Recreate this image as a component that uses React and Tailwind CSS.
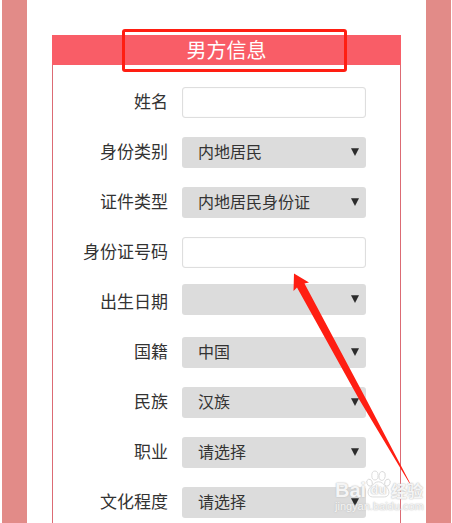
const fields = [
  { id: "name", label: "姓名", kind: "input" },
  { id: "identity", label: "身份类别", kind: "select", value: "内地居民" },
  { id: "document", label: "证件类型", kind: "select", value: "内地居民身份证" },
  { id: "number", label: "身份证号码", kind: "input" },
  { id: "birth", label: "出生日期", kind: "select", value: "", raised: true },
  { id: "country", label: "国籍", kind: "select", value: "中国" },
  { id: "ethnic", label: "民族", kind: "select", value: "汉族" },
  { id: "job", label: "职业", kind: "select", value: "请选择" },
  { id: "education", label: "文化程度", kind: "select", value: "请选择" },
];

function Field({ field }) {
  return (
    <div className={`flex h-[37px] gap-3.5 ${field.raised ? "items-start" : "items-center"}`}>
      <label
        htmlFor={field.id}
        className="w-[115px] shrink-0 self-center pb-[3px] text-right text-[17px] leading-6 whitespace-nowrap text-[#333]"
      >
        {field.label}
      </label>
      {field.kind === "input" ? (
        <input
          id={field.id}
          type="text"
          className="h-[31px] w-0 min-w-0 flex-1 rounded-[3px] border border-[#dedede] bg-white px-4 text-base text-[#333] shadow-[inset_0_0_1px_#dedede] outline-none"
        />
      ) : (
        <div className="relative min-w-0 flex-1">
          <select
            id={field.id}
            defaultValue={field.value}
            className="block h-[31px] w-full appearance-none rounded-[3px] bg-[#dcdcdc] px-4 pb-[3px] text-base leading-6 text-[#333] outline-none"
          >
            <option value={field.value}>{field.value}</option>
          </select>
          <svg
            viewBox="0 0 8 8"
            className="pointer-events-none absolute top-[11px] right-[7px] size-2 fill-[#2b2b2b]"
            aria-hidden="true"
          >
            <path d="M0 .2h8L4 8z" />
          </svg>
        </div>
      )}
    </div>
  );
}

function Watermark() {
  return (
    <div className="pointer-events-none absolute top-[468px] left-[335px] w-[92px] text-white/85 [text-shadow:0_0_1px_#bbb,0_0_2px_#c4c4c4]">
      <div className="flex h-8 items-end">
        <span className="w-[31px] shrink-0 font-['Liberation_Sans',sans-serif] text-xl leading-5 font-bold">Bai</span>
        <span className="relative flex h-8 w-[25px] shrink-0 items-end justify-center">
          <svg
            viewBox="0 0 28 31"
            className="absolute inset-x-0 top-0.5 h-7 w-[25px] fill-white/40 stroke-[#d8d8d8]"
            aria-hidden="true"
          >
            <ellipse cx="4" cy="14" rx="3" ry="4" transform="rotate(-20 4 14)" />
            <ellipse cx="10" cy="6" rx="3.500" ry="5" />
            <ellipse cx="18" cy="6.500" rx="3.500" ry="5" transform="rotate(12 18 6.500)" />
            <ellipse cx="24" cy="14" rx="3" ry="4" transform="rotate(20 24 14)" />
            <path d="M14 13c4 0 5.500 3 8.500 5.500 5 4 4 11.500-2 11.500h-13c-6 0-7-7.500-2-11.500C8.500 16 10 13 14 13z" />
          </svg>
          <span className="relative font-['Liberation_Sans',sans-serif] text-[13px] leading-5 font-bold">du</span>
        </span>
        <span className="text-base leading-5 font-bold whitespace-nowrap">经验</span>
      </div>
      <div className="font-['Liberation_Sans',sans-serif] text-[11px] leading-3">jingyan.baidu.com</div>
    </div>
  );
}

export default function App() {
  return (
    <div className="relative flex min-h-screen bg-white pr-px pl-0.5 font-['Noto_Sans_CJK_SC',sans-serif]">
      <div className="w-[25px] shrink-0 bg-[#e28b88]" />
      <main className="flex min-w-0 flex-1 flex-col px-[25px] pt-[35px]">
        <section className="flex flex-1 flex-col border-x border-[#dc6b74]">
          <header className="relative -mx-px h-[30px] bg-[#f95d67] text-center">
            <h1 className="text-xl leading-[30px] text-white">男方信息</h1>
            <div className="absolute -top-1.5 right-[54px] -bottom-[7px] left-[70px] rounded-[3px] border-3 border-[#ff1e12]" />
          </header>
          <form className="flex flex-col gap-[13px] pt-[19px] pr-[34px]">
            {fields.map((field) => (
              <Field key={field.id} field={field} />
            ))}
          </form>
        </section>
      </main>
      <div className="w-[25px] shrink-0 bg-[#e28b88]" />
      <svg
        viewBox="0 0 124 220"
        className="pointer-events-none absolute top-[273px] left-[292px] h-[220px] w-[124px] fill-[#ff1e12]"
        aria-hidden="true"
      >
        <path d="M2 .5 17 9.500 12.500 10.500 74 126 123 219.500 67.500 127 5 14.500 1.500 18z" />
      </svg>
      <Watermark />
    </div>
  );
}
